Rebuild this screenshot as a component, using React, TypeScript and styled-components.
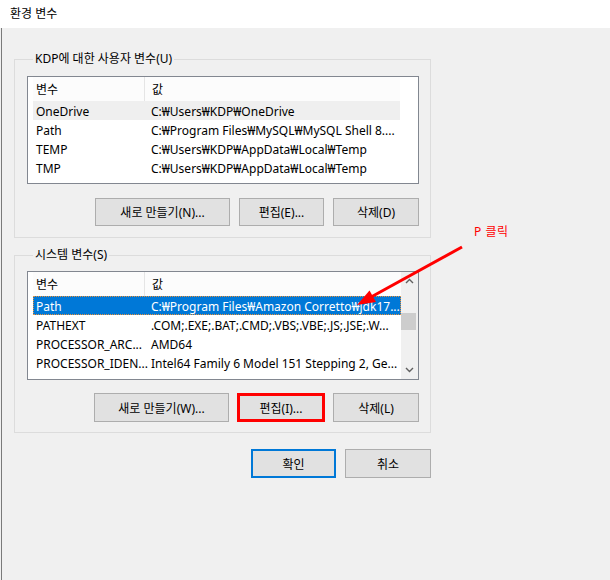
import React from "react";
import styled, { createGlobalStyle } from "styled-components";

const GlobalStyle = createGlobalStyle`
  html, body {
    margin: 0;
    padding: 0;
    background: #f0f0f0;
  }
  body {
    font-family: "Noto Sans", "Noto Sans CJK KR", sans-serif;
    font-size: 12px;
    color: #000;
  }
`;

const Window = styled.div`
  position: relative;
  width: 610px;
  height: 580px;
  overflow: hidden;
  background: #f0f0f0;
  display: flex;
  flex-direction: column;
`;

const TitleBar = styled.div`
  height: 28px;
  flex: none;
  background: #ffffff;
  display: flex;
  align-items: center;
  padding: 0 0 2px 10px;
  box-sizing: border-box;
  font-size: 12px;
`;

const Body = styled.div`
  flex: 1;
  margin-left: 1px;
  border-left: 1px solid #7a7a7a;
  padding: 23px 0 0 12px;
  display: flex;
  flex-direction: column;
`;

const GroupBox = styled.fieldset<{ $top?: number; $padTop: number; $padBottom: number }>`
  margin: ${(p) => p.$top ?? 0}px 0 0 0;
  width: 417px;
  box-sizing: border-box;
  min-inline-size: auto;
  border: 1px solid #dcdcdc;
  padding: ${(p) => p.$padTop}px 11px ${(p) => p.$padBottom}px 12px;
`;

const GroupLabel = styled.legend`
  margin-left: 6px;
  padding: 0 2px;
  font-size: 12px;
  line-height: 16px;
`;

const ListBox = styled.div<{ $height: number }>`
  height: ${(p) => p.$height}px;
  box-sizing: border-box;
  border: 1px solid #828790;
  background: #ffffff;
  display: flex;
  padding: 0 0 0 5px;
`;

const ListInner = styled.div`
  flex: 1;
  display: flex;
  flex-direction: column;
  min-width: 0;
`;

const HeaderRow = styled.div`
  height: 24px;
  display: grid;
  grid-template-columns: 111px 1fr;
  background: #fcfcfc;
`;

const HeaderCell = styled.div<{ $divider?: boolean }>`
  display: flex;
  align-items: center;
  padding-left: ${(p) => (p.$divider ? 7 : 3)}px;
  border-left: ${(p) => (p.$divider ? "1px solid #e5e5e5" : "none")};
  white-space: nowrap;
`;

const Row = styled.div<{ $state?: "selected" | "focused" }>`
  height: 19px;
  box-sizing: border-box;
  padding-top: 2px;
  display: grid;
  grid-template-columns: 115px 1fr;
  align-items: center;
  background: ${(p) =>
    p.$state === "selected" ? "#0078d7" : p.$state === "focused" ? "#efefef" : "transparent"};
  color: ${(p) => (p.$state === "selected" ? "#ffffff" : "#000000")};
  border: 1px dotted ${(p) => (p.$state === "selected" ? "#e8913a" : "transparent")};
`;

const Cell = styled.div`
  padding-left: 2px;
  white-space: nowrap;
  overflow: hidden;
  line-height: 15px;
`;

const Spacer = styled.div<{ $width: number }>`
  width: ${(p) => p.$width}px;
  flex: none;
`;

const ScrollBar = styled.div`
  width: 17px;
  flex: none;
  background: #f0f0f0;
  display: flex;
  flex-direction: column;
  align-items: center;
  justify-content: space-between;
  padding: 6px 0 6px;
  box-sizing: border-box;
`;

const ScrollTrack = styled.div`
  flex: 1;
  width: 100%;
  display: flex;
  flex-direction: column;
  padding-top: 29px;
  box-sizing: border-box;
`;

const Thumb = styled.div`
  width: 15px;
  height: 17px;
  background: #cdcdcd;
`;

const ButtonRow = styled.div<{ $gap: number; $top: number }>`
  display: flex;
  justify-content: flex-end;
  gap: ${(p) => p.$gap}px;
  margin-top: ${(p) => p.$top}px;
`;

const Button = styled.button<{ $width: number; $height?: number; $variant?: "marked" | "default" }>`
  width: ${(p) => p.$width}px;
  height: ${(p) => p.$height ?? 28}px;
  box-sizing: border-box;
  background: #e1e1e1;
  border: ${(p) =>
    p.$variant === "marked"
      ? "3px solid #ff0000"
      : p.$variant === "default"
      ? "2px solid #0078d7"
      : "1px solid #adadad"};
  font-family: inherit;
  font-size: 12px;
  color: #000;
  padding: 0;
  display: flex;
  align-items: center;
  justify-content: center;
`;

const BottomRow = styled(ButtonRow)`
  width: 417px;
`;

const Note = styled.div`
  position: absolute;
  left: 474px;
  top: 222px;
  color: #ff0000;
  font-size: 12px;
  letter-spacing: 0.5px;
`;

const ArrowLayer = styled.svg`
  position: absolute;
  left: 0;
  top: 0;
  pointer-events: none;
`;

const Chevron = ({ up }: { up?: boolean }) => (
  <svg width="9" height="6" viewBox="0 0 9 6">
    <path
      d={up ? "M1 5 L4.5 1.5 L8 5" : "M1 1 L4.5 4.5 L8 1"}
      fill="none"
      stroke="#606060"
      strokeWidth="1.4"
    />
  </svg>
);

type Item = { name: string; value: string; state?: "selected" | "focused" };

const userVars: Item[] = [
  { name: "OneDrive", value: "C:₩Users₩KDP₩OneDrive", state: "focused" },
  { name: "Path", value: "C:₩Program Files₩MySQL₩MySQL Shell 8...." },
  { name: "TEMP", value: "C:₩Users₩KDP₩AppData₩Local₩Temp" },
  { name: "TMP", value: "C:₩Users₩KDP₩AppData₩Local₩Temp" },
];

const systemVars: Item[] = [
  { name: "Path", value: "C:₩Program Files₩Amazon Corretto₩jdk17...", state: "selected" },
  { name: "PATHEXT", value: ".COM;.EXE;.BAT;.CMD;.VBS;.VBE;.JS;.JSE;.W..." },
  { name: "PROCESSOR_ARC...", value: "AMD64" },
  { name: "PROCESSOR_IDEN...", value: "Intel64 Family 6 Model 151 Stepping 2, Ge..." },
];

const VarList = ({ items }: { items: Item[] }) => (
  <ListInner>
    <HeaderRow>
      <HeaderCell>변수</HeaderCell>
      <HeaderCell $divider>값</HeaderCell>
    </HeaderRow>
    {items.map((it) => (
      <Row key={it.name} $state={it.state}>
        <Cell>{it.name}</Cell>
        <Cell>{it.value}</Cell>
      </Row>
    ))}
  </ListInner>
);

const App: React.FunctionComponent = () => (
  <Window>
    <GlobalStyle />
    <TitleBar>환경 변수</TitleBar>
    <Body>
      <GroupBox $padTop={9} $padBottom={11}>
        <GroupLabel>KDP에 대한 사용자 변수(U)</GroupLabel>
        <ListBox $height={108}>
          <VarList items={userVars} />
          <Spacer $width={18} />
        </ListBox>
        <ButtonRow $gap={9} $top={14}>
          <Button $width={135}>새로 만들기(N)...</Button>
          <Button $width={85}>편집(E)...</Button>
          <Button $width={86}>삭제(D)</Button>
        </ButtonRow>
      </GroupBox>

      <GroupBox $top={9} $padTop={8} $padBottom={10}>
        <GroupLabel>시스템 변수(S)</GroupLabel>
        <ListBox $height={109}>
          <VarList items={systemVars} />
          <ScrollBar>
            <Chevron up />
            <ScrollTrack>
              <Thumb />
            </ScrollTrack>
            <Chevron />
          </ScrollBar>
        </ListBox>
        <ButtonRow $gap={8} $top={13}>
          <Button $width={135} $height={29}>새로 만들기(W)...</Button>
          <Button $width={88} $height={29} $variant="marked">
            편집(I)...
          </Button>
          <Button $width={86} $height={29}>삭제(L)</Button>
        </ButtonRow>
      </GroupBox>

      <BottomRow $gap={9} $top={16}>
        <Button $width={85} $height={29} $variant="default">
          확인
        </Button>
        <Button $width={86} $height={29}>취소</Button>
      </BottomRow>
    </Body>

    <Note>P 클릭</Note>
    <ArrowLayer width="610" height="580" viewBox="0 0 610 580">
      <line x1="462" y1="247" x2="372" y2="296.5" stroke="#ff0000" strokeWidth="3" />
      <polygon points="357,305 376,302 369.5,290.5" fill="#ff0000" />
    </ArrowLayer>
  </Window>
);

export default App;
